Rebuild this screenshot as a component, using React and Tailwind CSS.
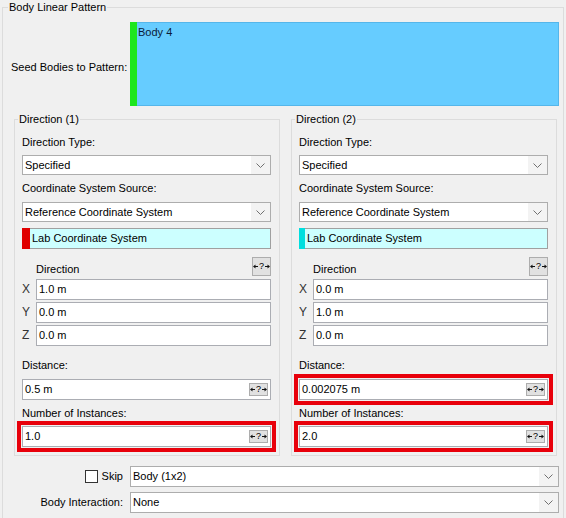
import React from "react";

function Chevron() {
  return (
    <svg width="9" height="5" viewBox="0 0 9 5" className="block">
      <path d="M0.5 0.5 L4.5 4.5 L8.5 0.5" fill="none" stroke="#707070" strokeWidth="1" />
    </svg>
  );
}

function Arrows() {
  return (
    <span className="flex items-center justify-center">
      <svg width="5" height="5" viewBox="0 0 5 5" className="block">
        <path d="M0 2.5 L2.5 0.5 L2.5 4.5 Z M2.5 2 H5 V3 H2.5 Z" fill="#111" />
      </svg>
      <span className="text-[9px] leading-[9px] text-black px-[0.5px]">?</span>
      <svg width="5" height="5" viewBox="0 0 5 5" className="block">
        <path d="M5 2.5 L2.5 0.5 L2.5 4.5 Z M0 2 H2.5 V3 H0 Z" fill="#111" />
      </svg>
    </span>
  );
}

function HelpButton({ small }) {
  return small ? (
    <div className="w-[19px] h-[13px] bg-[#e1e1e1] border border-[#adadad] flex items-center justify-center">
      <Arrows />
    </div>
  ) : (
    <div className="w-[19px] h-[19px] bg-[#e1e1e1] border border-[#adadad] flex items-center justify-center">
      <Arrows />
    </div>
  );
}

function Select({ value, className = "" }) {
  return (
    <div className={`h-[20px] bg-white border border-[#adadad] flex items-center ${className}`}>
      <span className="flex-1 pl-[2px] truncate">{value}</span>
      <div className="w-[19px] h-full bg-[#f3f3f3] flex items-center justify-center">
        <Chevron />
      </div>
    </div>
  );
}

function TextBox({ value, help, className = "" }) {
  return (
    <div className={`h-[21px] bg-white border border-[#abadb3] flex items-center ${className}`}>
      <span className="flex-1 pl-[2px]">{value}</span>
      {help && (
        <div className="mr-[2px]">
          <HelpButton small />
        </div>
      )}
    </div>
  );
}

function Highlight({ on, children }) {
  if (!on) return children;
  return <div className="-m-[5px] border-[4px] border-[#e8000b] p-[1px]">{children}</div>;
}

function DirectionGroup({ title, bar, x, y, z, distance, instances, markDistance, markInstances }) {
  return (
    <div className="relative w-[266px] h-[337px] border border-[#dcdcdc] pl-[7px] pr-[8px] pt-[15px]">
      <span className="absolute -top-[8px] left-[3px] px-[1px] bg-[#f0f0f0]">{title}</span>
      <div>Direction Type:</div>
      <Select value="Specified" className="mt-[5px]" />
      <div className="mt-[6px]">Coordinate System Source:</div>
      <Select value="Reference Coordinate System" className="mt-[6px]" />
      <div className="mt-[6px] h-[21px] bg-[#ccffff] border border-[#a0a0a0] flex items-stretch">
        <div className={`${bar} -my-px -ml-px`} />
        <span className="pl-[2px] flex items-center">Lab Coordinate System</span>
      </div>
      <div className="mt-[8px] flex items-end justify-between">
        <span className="pl-[14px] translate-y-[1px]">Direction</span>
        <HelpButton />
      </div>
      <div className="mt-[3px] flex flex-col gap-[2px]">
        {[["X", x], ["Y", y], ["Z", z]].map(([k, v]) => (
          <div key={k} className="flex items-center">
            <span className="w-[14px] text-[12px] text-[#333]">{k}</span>
            <TextBox value={v} className="flex-1" />
          </div>
        ))}
      </div>
      <div className="mt-[12px]">Distance:</div>
      <div className="mt-[6px]">
        <Highlight on={markDistance}>
          <TextBox value={distance} help />
        </Highlight>
      </div>
      <div className="mt-[6px]">Number of Instances:</div>
      <div className="mt-[5px]">
        <Highlight on={markInstances}>
          <TextBox value={instances} help />
        </Highlight>
      </div>
    </div>
  );
}

export default function App() {
  return (
    <div
      className="w-[566px] h-[518px] overflow-hidden bg-[#f0f0f0] text-black pt-[7px] pl-[2px] text-[11px] leading-[15px]"
      style={{ fontFamily: '"Liberation Sans", Arial, sans-serif' }}
    >
      <div className="relative w-[562px] h-[530px] border border-[#dcdcdc] pt-[14px]">
        <span className="absolute -top-[8px] left-[5px] px-[1px] bg-[#f0f0f0]">Body Linear Pattern</span>

        <div className="flex items-center">
          <div className="w-[127px] pl-[8px] translate-y-[3px]">Seed Bodies to Pattern:</div>
          <div className="w-[429px] h-[84px] bg-[#66ccff] border border-[#55b6ea] flex">
            <div className="w-[7px] -my-px -ml-px bg-[#1ee61e]" />
            <span className="pl-[1px] pt-[2px] text-[#0a1a3a]">Body 4</span>
          </div>
        </div>

        <div className="mt-[13px] ml-[11px] flex gap-[11px]">
          <DirectionGroup
            title="Direction (1)"
            bar="w-[8px] bg-[#e00000]"
            x="1.0 m"
            y="0.0 m"
            z="0.0 m"
            distance="0.5 m"
            instances="1.0"
            markInstances
          />
          <DirectionGroup
            title="Direction (2)"
            bar="w-[6px] bg-[#00dede]"
            x="0.0 m"
            y="1.0 m"
            z="0.0 m"
            distance="0.002075 m"
            instances="2.0"
            markDistance
            markInstances
          />
        </div>

        <div className="mt-[10px] flex flex-col gap-[5px]">
          <div className="flex items-center">
            <div className="w-[127px] pr-[7px] flex items-center justify-end gap-[4px]">
              <span className="w-[13px] h-[13px] bg-white border border-[#333]" />
              <span>Skip</span>
            </div>
            <Select value="Body (1x2)" className="w-[429px] h-[21px]" />
          </div>
          <div className="flex items-center">
            <div className="w-[127px] pr-[7px] text-right">Body Interaction:</div>
            <Select value="None" className="w-[429px] h-[21px]" />
          </div>
        </div>
      </div>
    </div>
  );
}
